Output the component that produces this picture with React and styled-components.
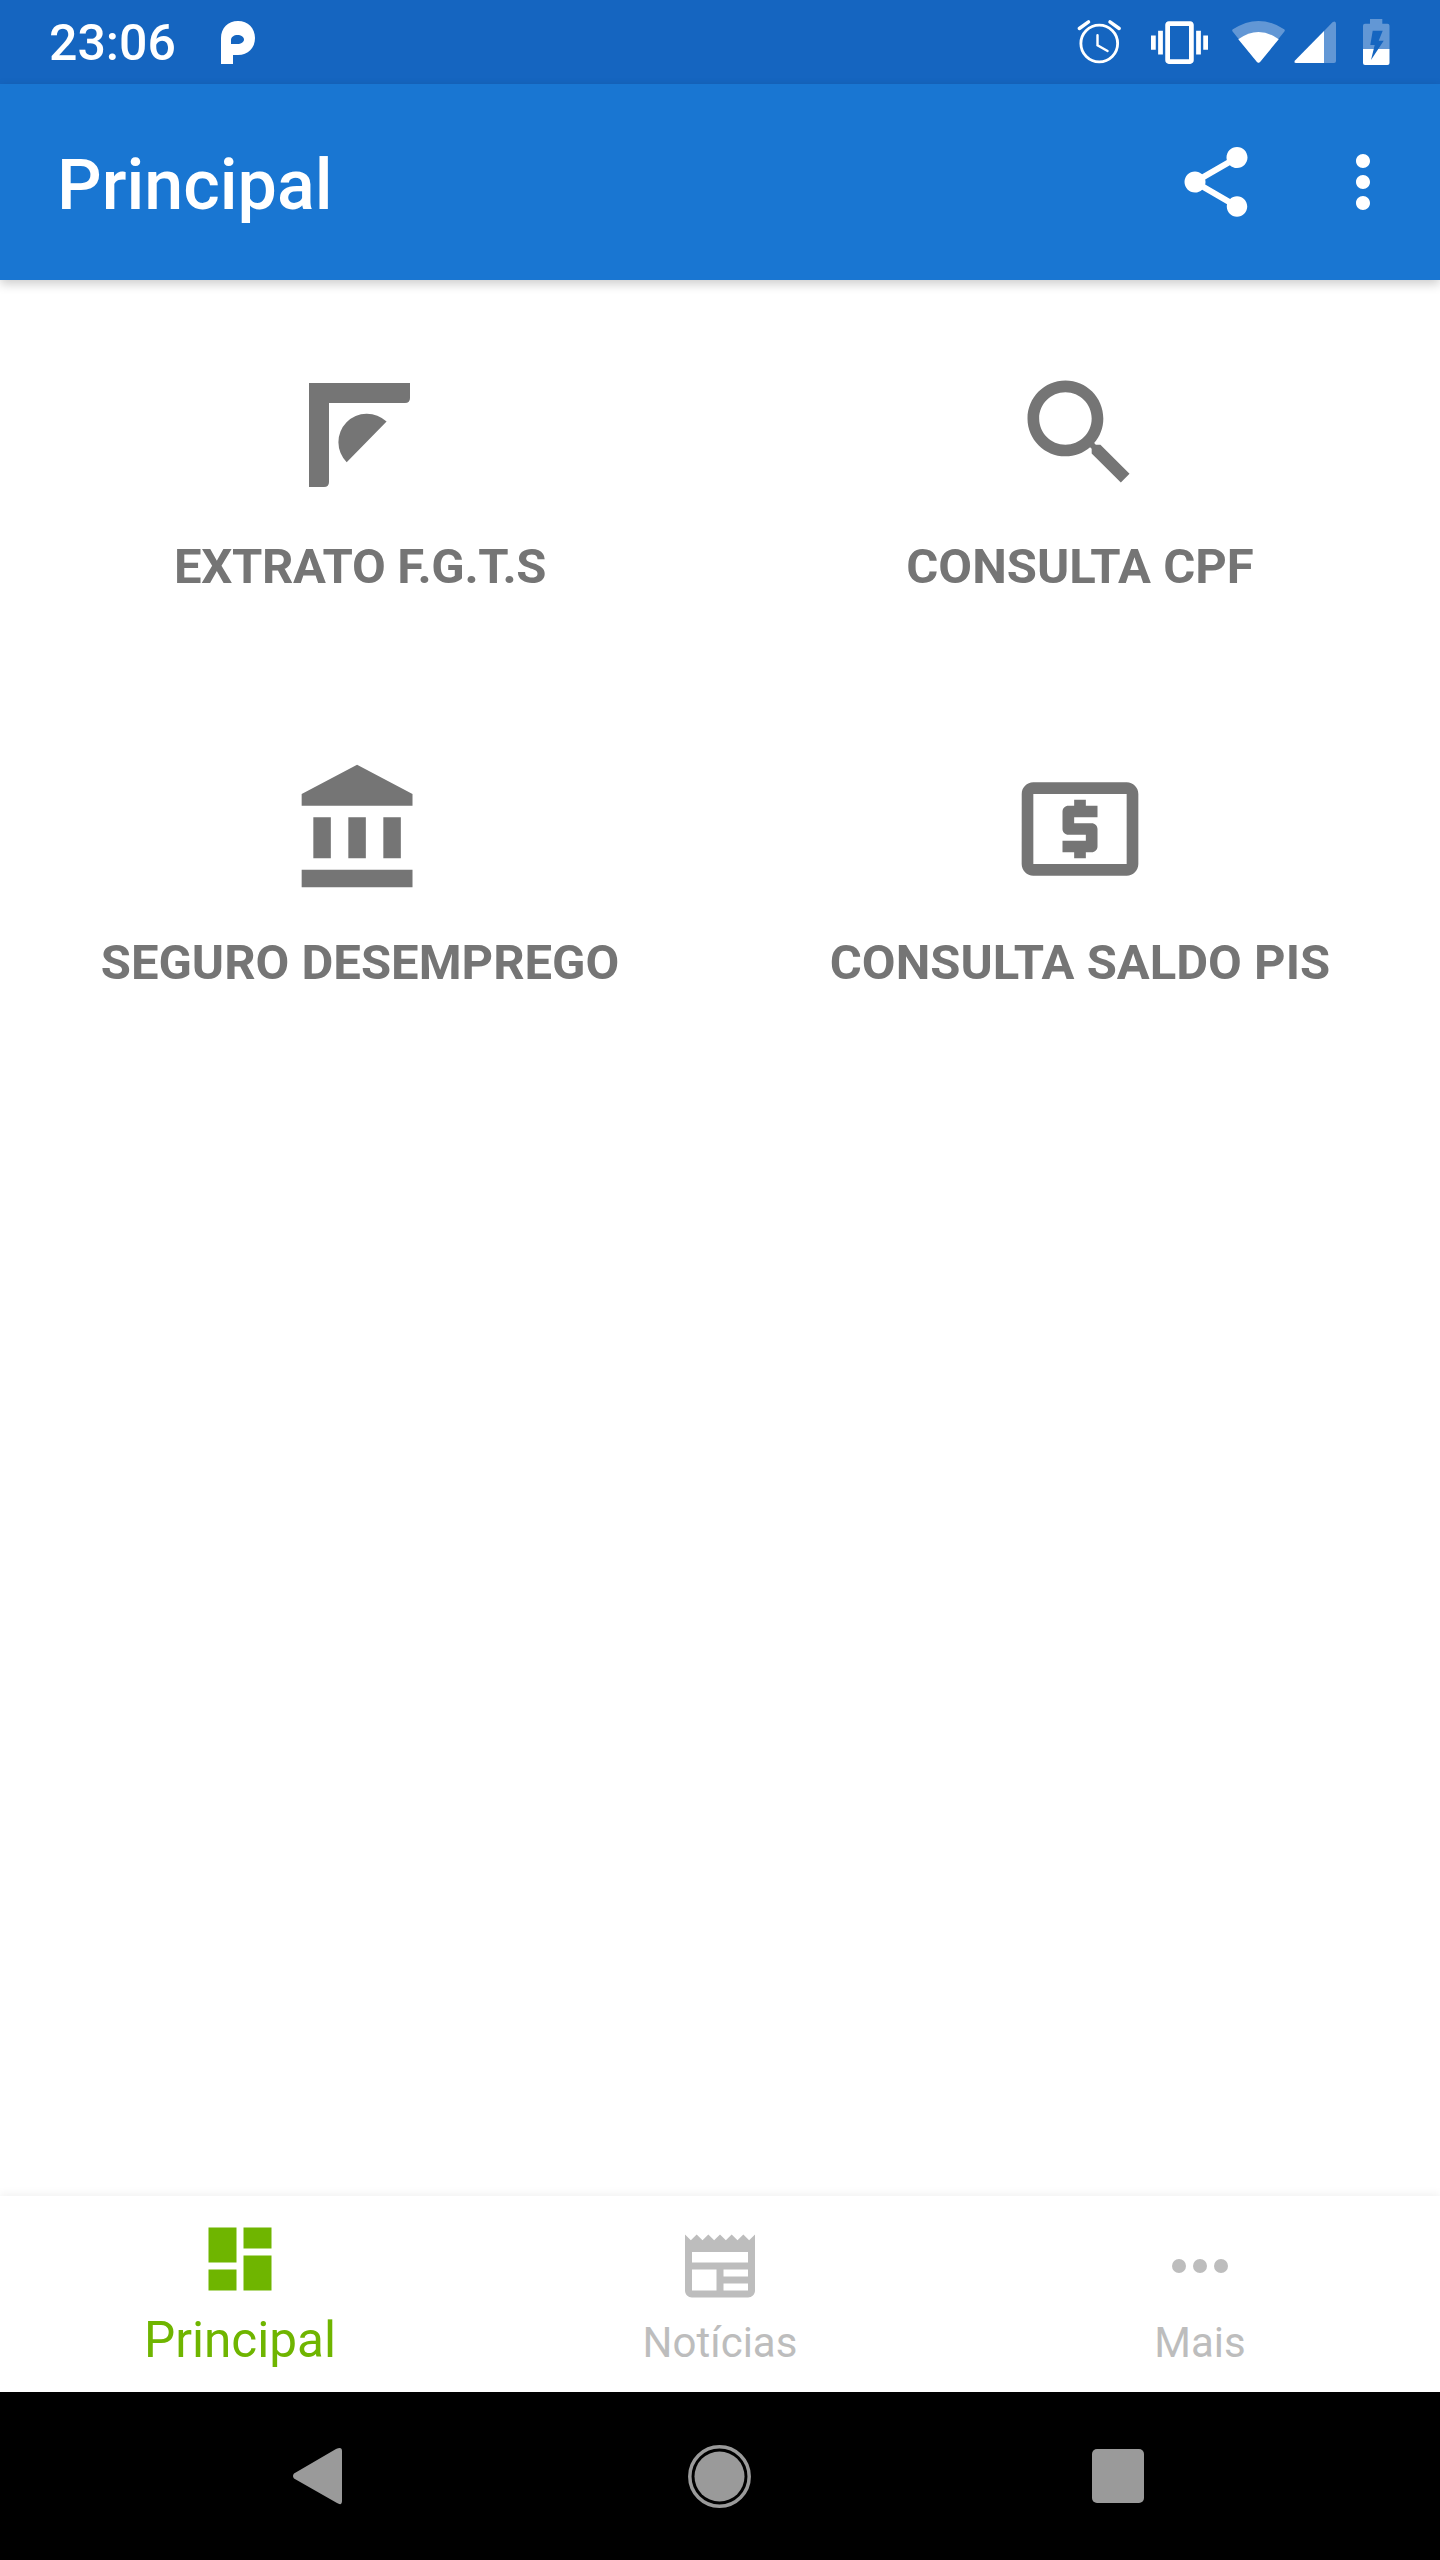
import styled, { createGlobalStyle } from 'styled-components';

const GlobalStyle = createGlobalStyle`
  html, body {
    margin: 0;
    padding: 0;
    background: #fff;
    font-family: Roboto, "Liberation Sans", sans-serif;
  }
`;

const SHORTCUTS = [
  { label: 'EXTRATO F.G.T.S', icon: 'fgts', tight: true },
  { label: 'CONSULTA CPF', icon: 'search' },
  { label: 'SEGURO DESEMPREGO', icon: 'bank' },
  { label: 'CONSULTA SALDO PIS', icon: 'money' }
];

const ShortcutIcon = ({ name }) => {
  if (name === 'fgts') {
    return (
      <BigIcon viewBox="0 0 140 140">
        <path d="M19 20H120V35Q120 40 115 40H39V119Q39 124 34 124H19Z" />
        <path d="M96.6 58.6A28.5 28.5 0 0 0 56.7 99.3Z" />
      </BigIcon>
    );
  }
  if (name === 'search') {
    return (
      <BigIcon viewBox="0 0 24 24">
        <path d="M15.5 14h-.79l-.28-.27C15.41 12.59 16 11.11 16 9.5 16 5.91 13.09 3 9.5 3S3 5.91 3 9.5 5.91 16 9.5 16c1.61 0 3.09-.59 4.23-1.57l.27.28v.79l5 4.99L20.49 19l-4.99-5zm-6 0C7.01 14 5 11.99 5 9.5S7.01 5 9.5 5 14 7.01 14 9.5 11.99 14 9.5 14z" />
      </BigIcon>
    );
  }
  if (name === 'bank') {
    return (
      <BigIcon viewBox="0 0 24 24">
        <path d="M4 10v7h3v-7H4zm6 0v7h3v-7h-3zM2 22h19v-3H2v3zm14-12v7h3v-7h-3zm-4.5-9L2 6v2h19V6l-9.5-5z" />
      </BigIcon>
    );
  }
  return (
    <BigIcon viewBox="0 0 24 24">
      <path d="M11 17h2v-1h1c.55 0 1-.45 1-1v-3c0-.55-.45-1-1-1h-3v-1h4V8h-2V7h-2v1h-1c-.55 0-1 .45-1 1v3c0 .55.45 1 1 1h3v1H9v2h2v1zm9-13H4c-1.11 0-1.99.89-1.99 2L2 18c0 1.11.89 2 2 2h16c1.11 0 2-.89 2-2V6c0-1.11-.89-2-2-2zm0 14H4V6h16v12z" />
    </BigIcon>
  );
};

function App () {
  return (
    <Screen>
      <GlobalStyle />
      <StatusBar>
        <Clock>23:06</Clock>
        <AppBadge viewBox="0 0 34 43">
          <path fillRule="evenodd" d="M0 43V17C0 7 7 0 17 0C27 0 34 7 34 17C34 27 27 34 17 34H12V43ZM10 23V19C10 16 13 14 16.5 14C20 14 23 16 23 18.5C23 21 20 23 16.5 23Z" />
        </AppBadge>
        <StatusIcons>
          <StatusIcon $w={52.5} $h={52.5} $gap={25} viewBox="0 0 24 24">
            <g fill="none" stroke="#fff" strokeLinecap="round">
              <circle cx="12" cy="12.6" r="8.4" strokeWidth="1.3" />
              <path strokeWidth="1.1" d="M11.2 8.8V13.4L15.8 16" />
              <path strokeWidth="1.6" d="M2.9 5.7L7.1 2.7M16.9 2.7L21.1 5.7" />
            </g>
          </StatusIcon>
          <StatusIcon $w={57} $h={57} $gap={24} viewBox="0 0 24 24">
            <path d="M0 15h2V9H0v6zm3 2h2V7H3v10zm19-8v6h2V9h-2zm-3 8h2V7h-2v10zM16.5 3h-9C6.67 3 6 3.67 6 4.5v15c0 .83.67 1.5 1.5 1.5h9c.83 0 1.5-.67 1.5-1.5v-15c0-.83-.67-1.5-1.5-1.5zM16 19H8V5h8v14z" />
          </StatusIcon>
          <StatusIcon $w={53} $h={42} $gap={9} viewBox="0 0 53 42">
            <path opacity="0.33" d="M.6 10.5Q-.4 9.4.9 8.3Q26.5-8.5 52.1 8.3Q53.4 9.4 52.4 10.5L28 41Q26.5 42.5 25 41Z" />
            <path d="M6.3 18.3Q26.5 3.7 46.7 18.3L28 41Q26.5 42.5 25 41Z" />
          </StatusIcon>
          <StatusIcon $w={42} $h={42} $gap={27} viewBox="0 0 42 42">
            <path opacity="0.33" d="M30 10L38.5 1.2Q42-1 42 3V40Q42 42 40 42H30Z" />
            <path d="M1 39.5L30 10V42H2Q-.5 42 1 39.5Z" />
          </StatusIcon>
          <StatusIcon $w={26.5} $h={46} viewBox="0 0 26.5 46">
            <path opacity="0.33" d="M7 0H19.3V4.7H24.5Q26.5 4.7 26.5 6.7V30H0V6.7Q0 4.7 2 4.7H7Z" />
            <path d="M0 30H26.5V44Q26.5 46 24.5 46H2Q0 46 0 44Z" />
            <path fill="#1565c0" d="M9.7 11.7H19.7L15.7 21.7H20.7L8 41L11.7 26H7.3Z" />
          </StatusIcon>
        </StatusIcons>
      </StatusBar>

      <AppBar>
        <Title>Principal</Title>
        <Actions>
          <ActionIcon viewBox="0 0 24 24">
            <path d="M18 16.08c-.76 0-1.44.3-1.96.77L8.91 12.7c.05-.23.09-.46.09-.7s-.04-.47-.09-.7l7.05-4.11c.54.5 1.25.81 2.04.81 1.66 0 3-1.34 3-3s-1.34-3-3-3-3 1.34-3 3c0 .24.04.47.09.7L8.04 9.81C7.5 9.31 6.79 9 6 9c-1.66 0-3 1.34-3 3s1.34 3 3 3c.79 0 1.5-.31 2.04-.81l7.12 4.16c-.05.21-.08.43-.08.65 0 1.61 1.31 2.92 2.92 2.92 1.61 0 2.92-1.31 2.92-2.92s-1.31-2.92-2.92-2.92z" />
          </ActionIcon>
          <ActionIcon viewBox="0 0 24 24">
            <path d="M12 8c1.1 0 2-.9 2-2s-.9-2-2-2-2 .9-2 2 .9 2 2 2zm0 2c-1.1 0-2 .9-2 2s.9 2 2 2 2-.9 2-2-.9-2-2-2zm0 6c-1.1 0-2 .9-2 2s.9 2 2 2 2-.9 2-2-.9-2-2-2z" />
          </ActionIcon>
        </Actions>
      </AppBar>

      <Content>
        <ShortcutGrid>
          {SHORTCUTS.map((item) => (
            <Shortcut key={item.label}>
              <ShortcutIcon name={item.icon} />
              <ShortcutLabel $tight={item.tight}>{item.label}</ShortcutLabel>
            </Shortcut>
          ))}
        </ShortcutGrid>
      </Content>

      <BottomNav>
        <NavItem $active>
          <NavIcon viewBox="0 0 24 24">
            <path d="M3 13h8V3H3v10zm0 8h8v-6H3v6zm10 0h8V11h-8v10zm0-18v6h8V3h-8z" />
          </NavIcon>
          <NavLabel $active>Principal</NavLabel>
        </NavItem>
        <NavItem>
          <NavIcon viewBox="0 0 24 24">
            <path d="M22 3l-1.67 1.67L18.67 3 17 4.67 15.33 3l-1.66 1.67L12 3l-1.67 1.67L8.67 3 7 4.67 5.33 3 3.67 4.67 2 3v16c0 1.1.9 2 2 2h16c1.1 0 2-.9 2-2V3zM11 19H4v-6h7v6zm9 0h-7v-2h7v2zm0-4h-7v-2h7v2zm0-4H4V8h16v3z" />
          </NavIcon>
          <NavLabel>Notícias</NavLabel>
        </NavItem>
        <NavItem>
          <NavIcon viewBox="0 0 84 84">
            <circle cx="21" cy="42" r="7" />
            <circle cx="42" cy="42" r="7" />
            <circle cx="63" cy="42" r="7" />
          </NavIcon>
          <NavLabel>Mais</NavLabel>
        </NavItem>
      </BottomNav>

      <SystemBar>
        <SystemIcon $w={49} $h={56} $gap={345.5} viewBox="0 0 49 56">
          <path d="M1 25.5L43 1Q49-2 49 3V53Q49 58 44 55L1 30.5Q-1 28 1 25.5Z" />
        </SystemIcon>
        <SystemIcon $w={63} $h={63} $gap={341.5} viewBox="0 0 63 63">
          <circle cx="31.5" cy="31.5" r="29.7" fill="none" stroke="#9a9a9a" strokeWidth="3.5" />
          <circle cx="31.5" cy="31.5" r="25" />
        </SystemIcon>
        <SystemIcon $w={52} $h={54} viewBox="0 0 52 54">
          <rect width="52" height="54" rx="5" />
        </SystemIcon>
      </SystemBar>
    </Screen>
  );
}

export default App;

const Screen = styled.div`
  width: 1440px;
  height: 2560px;
  display: flex;
  flex-direction: column;
  overflow: hidden;
  background: #fff;
`;

const StatusBar = styled.div`
  height: 84px;
  flex: none;
  display: flex;
  align-items: center;
  padding: 0 51px 0 49px;
  background: #1565c0;
  color: #fff;
`;

const Clock = styled.div`
  padding-top: 2px;
  font-size: 50px;
  font-weight: 500;
  line-height: 82px;
`;

const AppBadge = styled.svg`
  width: 34px;
  height: 43px;
  margin-left: 45px;
  fill: #fff;
`;

const StatusIcons = styled.div`
  margin-left: auto;
  display: flex;
  align-items: center;
`;

const StatusIcon = styled.svg`
  width: ${(props) => props.$w}px;
  height: ${(props) => props.$h}px;
  margin-right: ${(props) => props.$gap || 0}px;
  flex: none;
  fill: #fff;
  overflow: visible;
`;

const AppBar = styled.div`
  height: 196px;
  flex: none;
  position: relative;
  z-index: 2;
  display: flex;
  align-items: center;
  justify-content: space-between;
  padding: 0 35px 0 57px;
  background: #1976d2;
  box-shadow: 0 4px 10px rgba(0, 0, 0, 0.2);
`;

const Title = styled.div`
  padding-top: 6px;
  font-size: 70px;
  font-weight: 500;
  color: #fff;
`;

const Actions = styled.div`
  display: flex;
  gap: 63px;
`;

const ActionIcon = styled.svg`
  width: 84px;
  height: 84px;
  fill: #fff;
`;

const Content = styled.div`
  flex: 1;
  padding-top: 83px;
`;

const ShortcutGrid = styled.div`
  display: grid;
  grid-template-columns: 720px 720px;
  grid-auto-rows: 396px;
`;

const Shortcut = styled.div`
  display: flex;
  flex-direction: column;
  align-items: center;
`;

const BigIcon = styled.svg`
  width: 140px;
  height: 140px;
  fill: #757575;
`;

const ShortcutLabel = styled.div`
  margin-top: 29px;
  font-size: 49px;
  font-weight: 700;
  line-height: 70px;
  letter-spacing: ${(props) => (props.$tight ? '-0.35px' : '0')};
  color: #757575;
`;

const BottomNav = styled.div`
  height: 196px;
  flex: none;
  position: relative;
  z-index: 1;
  display: grid;
  grid-template-columns: repeat(3, 480px);
  background: #fff;
  box-shadow: 0 -3px 8px rgba(0, 0, 0, 0.05);
`;

const NavItem = styled.div`
  display: flex;
  flex-direction: column;
  align-items: center;
  padding-top: ${(props) => (props.$active ? 21 : 28)}px;
  color: ${(props) => (props.$active ? '#6fb500' : '#bdbdbd')};
`;

const NavIcon = styled.svg`
  width: 84px;
  height: 84px;
  fill: currentColor;
`;

const NavLabel = styled.div`
  margin-top: ${(props) => (props.$active ? 11 : 7)}px;
  font-size: ${(props) => (props.$active ? 49.5 : 42)}px;
  line-height: 56px;
`;

const SystemBar = styled.div`
  height: 168px;
  flex: none;
  display: flex;
  align-items: center;
  padding-left: 293px;
  background: #000;
`;

const SystemIcon = styled.svg`
  width: ${(props) => props.$w}px;
  height: ${(props) => props.$h}px;
  margin-right: ${(props) => props.$gap || 0}px;
  flex: none;
  fill: #9a9a9a;
  overflow: visible;
`;
